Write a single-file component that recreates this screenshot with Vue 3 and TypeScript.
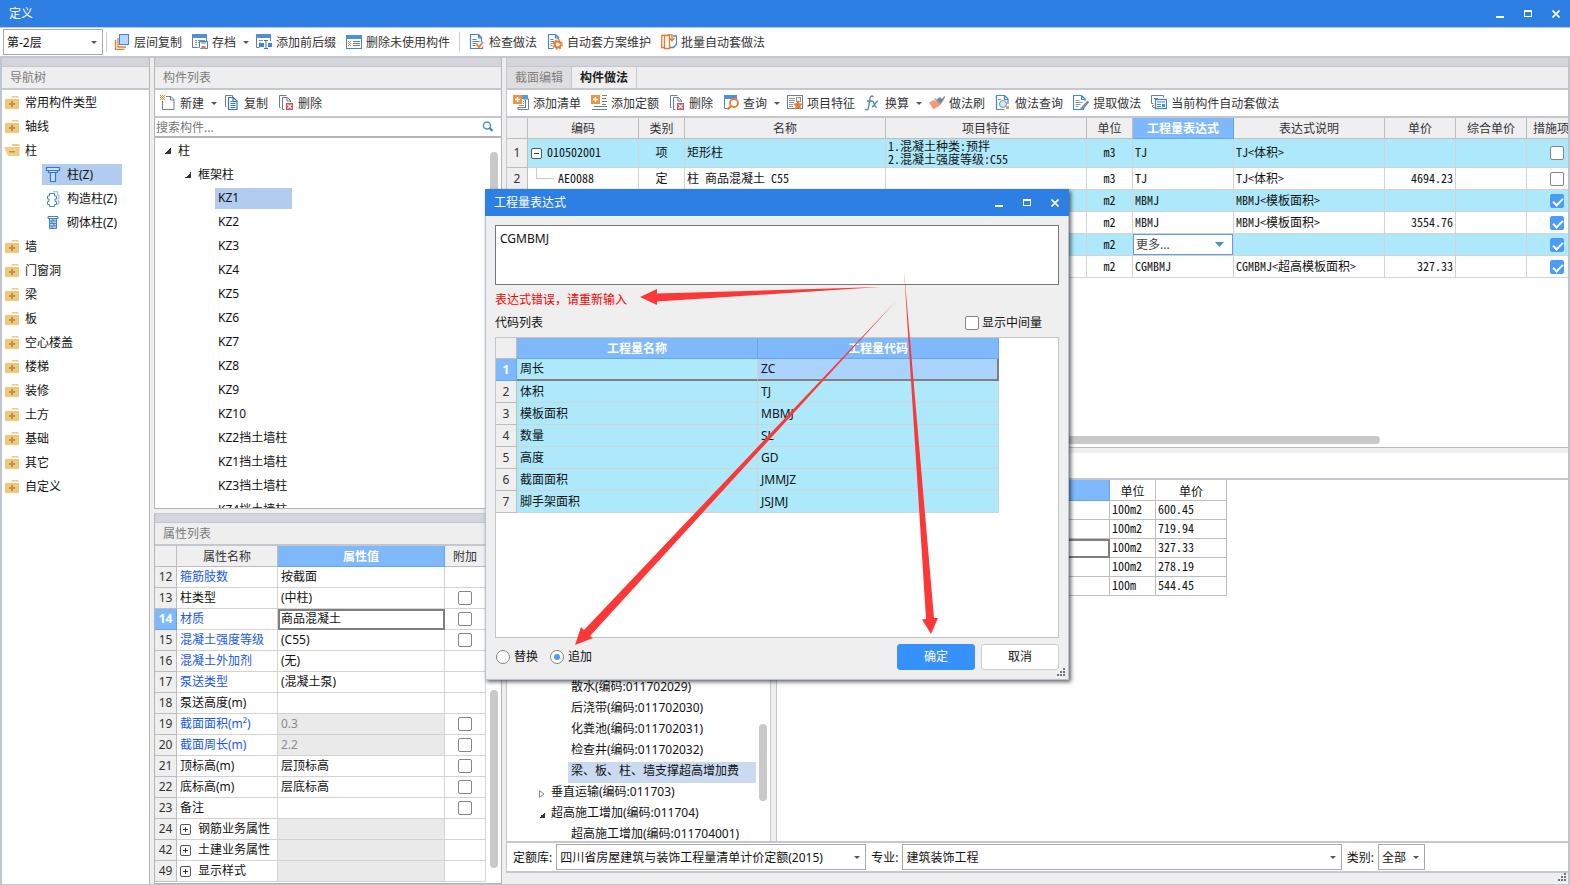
<script setup lang="ts">
import { ref } from 'vue'

interface ToolItem {
  icon: string
  label: string
  caret?: boolean
  sep?: boolean
}

const icons: Record<string, string> = {
  layers:
    '<path d="M1.500 6v9.500h9M4 4v9h8" fill="none" stroke="#ee7a30" stroke-width="1.300"/><rect x="5.500" y=".5" width="9" height="10" fill="#b5d7ff" stroke="#3f88d8"/>',
  archive:
    '<path d="M0 0h15v4H0z" fill="#4a90dc"/><path d="M.5 3v10.500h6M14.500 3v4" fill="none" stroke="#6b7f92"/><path d="M3 6.500h2M6 6.500h7M3 8.500h2M3 10.500h2M6 8.500h1" stroke="#8796a3"/><path d="M7.500 7.500h8v7h-7l-1-1z" fill="#fff" stroke="#3b7fd0"/><path d="M9 8h5v2H9z" fill="#9ec7f2"/><path d="M9.500 12h4v3h-4z" fill="#ee7a30"/>',
  affix:
    '<path d="M0 0h15v4H0z" fill="#4a90dc"/><path d="M.5 3v10.500h3M14.500 3v4" fill="none" stroke="#6b7f92"/><path d="M3 6.500h4M3 9h2" stroke="#8796a3"/><path d="M3 9h5v4H3zM12 9h4v4h-4z" fill="#3f88d8"/><path d="M8 6.500h4M10 6.500v8M8 14.500h4" stroke="#2f78cc"/>',
  purge:
    '<rect x=".5" y="1.500" width="15" height="13" fill="#fff" stroke="#3f88d8"/><path d="M0 1h16v4H0z" fill="#4a90dc"/><path d="M2 7h1v1H2zM4 7h1v1H4zM3 8h1v1H3zM2 9h1v1H2zM4 9h1v1H4zM3 10h1v1H3zM2 11h1v1H2zM4 11h1v1H4z" fill="#ee7a30"/><path d="M7 7.500h7M7 9.500h7M7 11.500h7" stroke="#6b7f92"/>',
  check:
    '<path d="M9.500.5h-8v14h12v-2M9.500.5l3 3V8M9.500.5v3.500h3.500" fill="none" stroke="#3f88d8" stroke-width="1.200"/><path d="M3.500 5.500h4M3.500 7.500h7M3.500 9.500h4M3.500 11.500h3" stroke="#6b7f92"/><path d="M7.500 10l2.500 3 4-5" fill="none" stroke="#ee7a30" stroke-width="1.800"/>',
  gearDoc:
    '<path d="M8.500.5h-7v14h5M8.500.5l3 3V6M8.500.5v3.500H12" fill="none" stroke="#3f88d8" stroke-width="1.200"/><path d="M3.500 5.500h3M3.500 7.500h4M3.500 9.500h2M3.500 11.500h2" stroke="#6b7f92"/><circle cx="10.700" cy="10.500" r="3" fill="#fff" stroke="#ee7a30" stroke-width="2"/><circle cx="10.700" cy="10.500" r="4.600" fill="none" stroke="#ee7a30" stroke-width="1.200" stroke-dasharray="1.900 1.720"/>',
  batch:
    '<path d="M5 1.500H.7v12H3" fill="none" stroke="#ee7a30" stroke-width="1.300"/><path d="M12 2h3.500v8l-3 3.500H9" fill="none" stroke="#3f88d8" stroke-width="1.300"/><path d="M3.500 1.500h5v13h-5z" fill="#fff" stroke="#ee7a30" stroke-width="1.300"/><path d="M6 .8h5v5M8.500 4l2.500 2.800L13.500 4" fill="none" stroke="#ee7a30" stroke-width="1.300"/>',
  create:
    '<path d="M6 1.500h5l3 3v10H2.500V6M10.500 1.500V5H14" fill="none" stroke="#6b7f92"/><path d="M0 0h1v1H0zM2 0h1v1H2zM4 0h1v1H4zM1 1h1v1H1zM3 1h1v1H3zM0 2h1v1H0zM2 2h1v1H2zM4 2h1v1H4zM1 3h1v1H1zM3 3h1v1H3zM0 4h1v1H0zM2 4h1v1H2zM4 4h1v1H4z" fill="#ee8a20"/>',
  copy:
    '<path d="M2.500 11.500h-1v-11h7v2" fill="none" stroke="#6b7f92"/><path d="M4.500 2.500h5l3.500 3.500v8.500H4.500zM9 2.500V6.500h4" fill="none" stroke="#2f78cc" stroke-width="1.200"/><path d="M6.500 6.500h2M6.500 8.500h5M6.500 10.500h5M6.500 12.500h5" stroke="#2f78cc"/>',
  remove:
    '<path d="M2.500 12.500h-1V.5h7M6.500 14.500h-2v-12h5l3 3V7M9 2.500V6h4" fill="none" stroke="#6b7f92"/><path d="M8 8h7v7H8z" fill="#d0545c"/><path d="M9.500 9.500l4 4M13.500 9.500l-4 4" stroke="#fff" stroke-width="1.200"/>',
  addList:
    '<path d="M5 12v2.500h10.500V4H10M12.500 6.500v6h-8" fill="none" stroke="#6b7f92"/><path d="M9 0h6v4H9z" fill="#5a9be6"/><path d="M6 12.500h6.500V5" fill="none" stroke="#6b7f92"/><path d="M0 0h9v9H0z" fill="#eb9446"/><path d="M4.500 2v5M2 4.500h5" stroke="#fff" stroke-width="1.300"/><path d="M10 6.500h1M10 8.500h1M6 10.500h5" stroke="#8796a3"/>',
  addQuota:
    '<path d="M0 0h9v9H0z" fill="#eb9446"/><path d="M4.500 2v5M2 4.500h5" stroke="#fff" stroke-width="1.300"/><path d="M11 .5h5M11 3.500h4M11 6.500h5M11 9.500h4M3 11.500h13M1 14.500h15" stroke="#6b7f92"/>',
  query:
    '<path d="M1.500 4v9.500h3M13.500 4v1" fill="none" stroke="#3f88d8"/><path d="M1 0h13v4H1z" fill="#4a90dc"/><circle cx="11" cy="8" r="4" fill="#fff" stroke="#ee7a30" stroke-width="1.800"/><path d="M8 11l-3.500 3.500" stroke="#ee7a30" stroke-width="2.200"/>',
  feature:
    '<rect x=".5" y=".5" width="15" height="13" fill="#fff" stroke="#6b7f92"/><path d="M2 3.500h6M2 5.500h6M2 7.500h5M2 9.500h4M2 11.500h4" stroke="#8796a3"/><rect x="9.500" y="2.500" width="4" height="4" fill="none" stroke="#8796a3"/><path d="M11 5l1.500 3.300 3.500.4-2.600 2.400.7 3.600-3.100-1.800-3.100 1.800.7-3.600L6 8.700l3.500-.4z" fill="#ee7a30"/>',
  fx: '<path d="M8.500 1.800C6.500-.2 5.300 1.500 4.900 4L3.700 11.500C3.300 14.500 2 15.800.3 14.200M2 6h5.500M7 6.500c2.500-1 2 6.500 4.800 5.500M13 6c-2 0-3.500 5.700-6 5.800" fill="none" stroke="#4c87c4" stroke-width="1.400"/>',
  brush:
    '<path d="M7 5l4-3 2 2 2.500-3 .5 1-2 4-5 6z" fill="#7a8690"/><path d="M5 4l6 6 1-1-6-6z" fill="#9aa3aa"/><path d="M5 5L0 7.500l4.500 7 7-5z" fill="#f79a6c"/>',
  findDoc:
    '<path d="M9.500.5h-8v14h8M9.500.5l3.500 3.500v5M9.500.5v4H13" fill="none" stroke="#3f88d8" stroke-width="1.200"/><circle cx="8" cy="9" r="3.500" fill="#d5e7fb" stroke="#7094be"/><path d="M3 4.500h3" stroke="#8796a3"/><path d="M11 11h3v3h-3z" fill="#f0a030"/>',
  extract:
    '<path d="M8.500.5h-8v14h10v-3M8.500.5l3.500 3.500v2M8.500.5v4H12" fill="none" stroke="#3f88d8" stroke-width="1.200"/><path d="M2.500 5.500h4M2.500 7.500h7M2.500 9.500h5M2.500 11.500h3" stroke="#8796a3"/><path d="M14.500 5.500l-5.500 6-1 3.500 3-1.500 5-6z" fill="#7d8c98"/><path d="M7 15l1-3 2 1.800z" fill="#25a0d0"/>',
  current:
    '<path d="M2.500 8.500h-2v-8h12v2M3 3.500h4M1.500 12V10" fill="none" stroke="#6b7f92"/><rect x="4.500" y="4.500" width="11" height="9" fill="#fff" stroke="#3f88d8" stroke-width="1.300"/><path d="M6 7h8M6 9.500h4M6 11.500h4" stroke="#3f88d8"/><path d="M11 9h3v3h-3z" fill="#4a90dc"/><path d="M1 10h2v1H1zM2 12h2v1H2z" fill="#ee7a30"/>',
  folder:
    '<path d="M8 1h6l1 1.500H7zM1 4h14v10H1z" fill="#efc87f"/><path d="M7 6h2v2h2v2H9v2H7v-2H5V8h2z" fill="#c5923a"/>',
  folderOpen:
    '<path d="M8 1h7.500v12H9z" fill="#efc87f"/><path d="M3 3.500h12" stroke="#fff"/><path d="M0 4h12l2 9H4z" fill="#f1cd88"/><path d="M5 8h6v1.500H5z" fill="#c5923a"/>',
  column:
    '<path d="M1.500.5h13v3h-13zM3.500 3.500h9v2h-9zM5.500 5.500h5v9h-5z" fill="#c9e0f8" stroke="#2f78cc" stroke-width="1.200"/>',
  tieColumn:
    '<path d="M8 .7h4.500V4H14v3.500h-1V10h1v3h-2" fill="none" stroke="#8ab8ea"/><path d="M4.500 2.500h5V5h2v3h-1.500v2.500h1.500v3h-2v2h-5v-2h-2v-3H4V8H2.500V5h2z" fill="#fff" stroke="#3f88d8"/>',
  brickColumn:
    '<path d="M3 1.500h10v2H3z" fill="#fff" stroke="#3f88d8"/><path d="M4.500 3.500h7v10h-7z" fill="#b4d2f2" stroke="#4a84bc"/><path d="M5 6h6M5 8.500h6M5 11h6M8 4v2M7 6v2.500M9 8.500V11M7 11v2.500" stroke="#4a84bc"/>'
}

const mainTools: ToolItem[] = [
  { icon: 'layers', label: '层间复制' },
  { icon: 'archive', label: '存档', caret: true },
  { icon: 'affix', label: '添加前后缀' },
  { icon: 'purge', label: '删除未使用构件', sep: true },
  { icon: 'check', label: '检查做法' },
  { icon: 'gearDoc', label: '自动套方案维护' },
  { icon: 'batch', label: '批量自动套做法' }
]
const listTools: ToolItem[] = [
  { icon: 'create', label: '新建', caret: true },
  { icon: 'copy', label: '复制' },
  { icon: 'remove', label: '删除' }
]
const methodTools: ToolItem[] = [
  { icon: 'addList', label: '添加清单' },
  { icon: 'addQuota', label: '添加定额' },
  { icon: 'remove', label: '删除' },
  { icon: 'query', label: '查询', caret: true },
  { icon: 'feature', label: '项目特征' },
  { icon: 'fx', label: '换算', caret: true },
  { icon: 'brush', label: '做法刷' },
  { icon: 'findDoc', label: '做法查询' },
  { icon: 'extract', label: '提取做法' },
  { icon: 'current', label: '当前构件自动套做法' }
]

const navItems = [
  { label: '常用构件类型', icon: 'folder' },
  { label: '轴线', icon: 'folder' },
  { label: '柱', icon: 'folderOpen' },
  { label: '柱(Z)', icon: 'column', child: true, active: true },
  { label: '构造柱(Z)', icon: 'tieColumn', child: true },
  { label: '砌体柱(Z)', icon: 'brickColumn', child: true },
  ...['墙', '门窗洞', '梁', '板', '空心楼盖', '楼梯', '装修', '土方', '基础', '其它', '自定义'].map(
    (label) => ({ label, icon: 'folder', child: false, active: false })
  )
]

const components = [
  'KZ1', 'KZ2', 'KZ3', 'KZ4', 'KZ5', 'KZ6', 'KZ7', 'KZ8', 'KZ9', 'KZ10',
  'KZ2挡土墙柱', 'KZ1挡土墙柱', 'KZ3挡土墙柱', 'KZ4挡土墙柱'
]

interface Prop {
  no: number
  name: string
  value?: string
  link?: boolean
  box?: boolean
  muted?: boolean
  group?: boolean
  current?: boolean
}
const props: Prop[] = [
  { no: 12, name: '箍筋肢数', value: '按截面', link: true },
  { no: 13, name: '柱类型', value: '(中柱)', box: true },
  { no: 14, name: '材质', value: '商品混凝土', link: true, box: true, current: true },
  { no: 15, name: '混凝土强度等级', value: '(C55)', link: true, box: true },
  { no: 16, name: '混凝土外加剂', value: '(无)', link: true },
  { no: 17, name: '泵送类型', value: '(混凝土泵)', link: true },
  { no: 18, name: '泵送高度(m)' },
  { no: 19, name: '截面面积(m²)', value: '0.3', link: true, box: true, muted: true },
  { no: 20, name: '截面周长(m)', value: '2.2', link: true, box: true, muted: true },
  { no: 21, name: '顶标高(m)', value: '层顶标高', box: true },
  { no: 22, name: '底标高(m)', value: '层底标高', box: true },
  { no: 23, name: '备注', box: true },
  { no: 24, name: '钢筋业务属性', group: true, muted: true },
  { no: 42, name: '土建业务属性', group: true, muted: true },
  { no: 49, name: '显示样式', group: true, muted: true }
]

interface Work {
  no: string
  code?: string
  kind?: string
  name?: string
  features?: string[]
  unit: string
  expr?: string
  note?: string
  price?: string
  measure: boolean
}
const works = ref<Work[]>([
  { no: '1', code: '010502001', kind: '项', name: '矩形柱', features: ['1.混凝土种类:预拌', '2.混凝土强度等级:C55'], unit: 'm3', expr: 'TJ', note: 'TJ<体积>', measure: false },
  { no: '2', code: 'AE0088', kind: '定', name: '柱 商品混凝土 C55', unit: 'm3', expr: 'TJ', note: 'TJ<体积>', price: '4694.23', measure: false },
  { no: '', unit: 'm2', expr: 'MBMJ', note: 'MBMJ<模板面积>', measure: true },
  { no: '', unit: 'm2', expr: 'MBMJ', note: 'MBMJ<模板面积>', price: '3554.76', measure: true },
  { no: '', unit: 'm2', measure: true },
  { no: '', unit: 'm2', expr: 'CGMBMJ', note: 'CGMBMJ<超高模板面积>', price: '327.33', measure: true }
])

const quotaTree = [
  { label: '散水(编码:011702029)', level: 2 },
  { label: '后浇带(编码:011702030)', level: 2 },
  { label: '化粪池(编码:011702031)', level: 2 },
  { label: '检查井(编码:011702032)', level: 2 },
  { label: '梁、板、柱、墙支撑超高增加费', level: 2, active: true },
  { label: '垂直运输(编码:011703)', level: 1, open: false },
  { label: '超高施工增加(编码:011704)', level: 1, open: true },
  { label: '超高施工增加(编码:011704001)', level: 2 }
]

const quotas = [
  ['100m2', '600.45'],
  ['100m2', '719.94'],
  ['100m2', '327.33'],
  ['100m2', '278.19'],
  ['100m', '544.45']
]

const codes = [
  ['周长', 'ZC'],
  ['体积', 'TJ'],
  ['模板面积', 'MBMJ'],
  ['数量', 'SL'],
  ['高度', 'GD'],
  ['截面面积', 'JMMJZ'],
  ['脚手架面积', 'JSJMJ']
]

const expression = ref('CGMBMJ')
const mode = ref('append')
const showMiddle = ref(false)
</script>

<template>
  <div class="window">
    <header class="titlebar">
      <span>定义</span>
      <div class="winbtns">
        <button aria-label="最小化"><svg width="8" height="8"><path d="M0 6h8v2H0z" fill="#fff" /></svg></button>
        <button aria-label="最大化"><svg width="8" height="8"><path d="M0 0h8v7H0zM1 2v4h6V2z" fill="#fff" fill-rule="evenodd" /></svg></button>
        <button aria-label="关闭"><svg width="8" height="8"><path d="M.5.5l7 7M7.500.5l-7 7" stroke="#fff" stroke-width="1.700" /></svg></button>
      </div>
    </header>

    <div class="toolbar main-tools">
      <select class="combo floor" aria-label="楼层"><option>第-2层</option></select>
      <i class="sep"></i>
      <template v-for="t in mainTools" :key="t.label">
        <button class="tool">
          <svg class="ico" viewBox="0 0 16 16" v-html="icons[t.icon]"></svg><span>{{ t.label }}</span><i v-if="t.caret" class="caret"></i>
        </button>
        <i v-if="t.sep" class="sep"></i>
      </template>
    </div>

    <main class="body">
      <aside class="panel nav">
        <div class="strip"></div>
        <h2 class="phead">导航树</h2>
        <ul class="navtree">
          <li v-for="n in navItems" :key="n.label" :class="{ child: n.child, active: n.active }">
            <span class="node"><svg class="ico" viewBox="0 0 16 16" v-html="icons[n.icon]"></svg>{{ n.label }}</span>
          </li>
        </ul>
      </aside>

      <div class="middle">
        <section class="panel list">
          <div class="strip"></div>
          <h2 class="phead">构件列表</h2>
          <div class="toolbar">
            <button v-for="t in listTools" :key="t.label" class="tool">
              <svg class="ico" viewBox="0 0 16 16" v-html="icons[t.icon]"></svg><span>{{ t.label }}</span><i v-if="t.caret" class="caret"></i>
            </button>
          </div>
          <label class="search">
            <input type="text" placeholder="搜索构件..." aria-label="搜索构件" />
            <svg width="12" height="12"><circle cx="5" cy="4.500" r="3.500" fill="none" stroke="#4a97cf" stroke-width="1.500" /><path d="M7.500 7l3 3" stroke="#2f84c0" stroke-width="2" /></svg>
          </label>
          <div class="treewrap">
            <ul class="comptree">
              <li class="root"><i class="open"></i>柱</li>
              <li class="branch"><i class="open"></i>框架柱</li>
              <li v-for="(c, i) in components" :key="c" class="leaf" :class="{ active: i === 0 }"><span>{{ c }}</span></li>
            </ul>
            <i class="thumb tall"></i>
          </div>
        </section>

        <section class="panel attrs">
          <div class="strip"></div>
          <h2 class="phead">属性列表</h2>
          <div class="attrwrap">
            <table class="grid attr-table">
              <colgroup><col class="w-no" /><col class="w-name" /><col /><col class="w-add" /></colgroup>
              <thead><tr><th></th><th>属性名称</th><th class="hot">属性值</th><th>附加</th></tr></thead>
              <tbody>
                <tr v-for="p in props" :key="p.no">
                  <th :class="{ hot: p.current }">{{ p.no }}</th>
                  <td :class="{ link: p.link }">
                    <button v-if="p.group" class="fold plus" aria-label="展开"></button>{{ p.name }}
                  </td>
                  <td :class="{ muted: p.muted, cursor: p.current }">{{ p.value }}</td>
                  <td><input v-if="p.box" type="checkbox" :aria-label="p.name + ' 附加'" /></td>
                </tr>
              </tbody>
            </table>
            <i class="thumb low"></i>
          </div>
        </section>
      </div>

      <section class="right">
        <div class="panel work">
          <div class="strip"></div>
          <div class="tabs">
            <button>截面编辑</button>
            <button class="on">构件做法</button>
          </div>
          <div class="toolbar method-tools">
            <button v-for="t in methodTools" :key="t.label" class="tool">
              <svg class="ico" viewBox="0 0 16 16" v-html="icons[t.icon]"></svg><span>{{ t.label }}</span><i v-if="t.caret" class="caret"></i>
            </button>
          </div>

          <div class="split">
            <div class="upper">
              <table class="grid work-table">
                <colgroup>
                  <col class="w-no" /><col class="w-code" /><col class="w-unit" /><col class="w-long" /><col class="w-long" /><col class="w-unit" />
                  <col class="w-expr" /><col class="w-note" /><col class="w-price" /><col class="w-price" /><col class="w-measure" />
                </colgroup>
                <thead>
                  <tr>
                    <th></th><th>编码</th><th>类别</th><th>名称</th><th>项目特征</th><th>单位</th>
                    <th class="hot">工程量表达式</th><th>表达式说明</th><th>单价</th><th>综合单价</th><th>措施项目</th>
                  </tr>
                </thead>
                <tbody>
                  <tr v-for="(w, i) in works" :key="i" :class="{ cyan: i % 2 === 0, first: i === 0 }">
                    <th>{{ w.no }}</th>
                    <td class="code">
                      <button v-if="i === 0" class="fold" aria-label="折叠"></button>
                      <i v-if="i === 1" class="elbow"></i>{{ w.code }}
                    </td>
                    <td class="mid">{{ w.kind }}</td>
                    <td>{{ w.name }}</td>
                    <td class="features"><div v-for="f in w.features" :key="f">{{ f }}</div></td>
                    <td class="mid">{{ w.unit }}</td>
                    <td :class="{ editing: i === 4 }">
                      <select v-if="i === 4" class="more" aria-label="工程量表达式"><option>更多...</option></select>
                      <template v-else>{{ w.expr }}</template>
                    </td>
                    <td>{{ w.note }}</td>
                    <td class="num">{{ w.price }}</td>
                    <td></td>
                    <td class="tick"><input v-model="w.measure" type="checkbox" aria-label="措施项目" /></td>
                  </tr>
                </tbody>
              </table>
              <i class="hthumb"></i>
            </div>
            <div class="lower">
              <div class="lowbar"></div>
              <div class="lowsplit">
                <div class="quotatree">
                  <ul>
                    <li v-for="q in quotaTree" :key="q.label" :class="['lv' + q.level, { active: q.active }]">
                      <i v-if="q.level === 1" :class="q.open ? 'open' : 'shut'"></i><span>{{ q.label }}</span>
                    </li>
                  </ul>
                  <i class="thumb short"></i>
                </div>
                <div class="quotas">
                  <table class="grid quota-table">
                    <colgroup><col class="w-blank" /><col class="w-unit" /><col class="w-price" /></colgroup>
                    <thead><tr><th class="hot"></th><th>单位</th><th>单价</th></tr></thead>
                    <tbody>
                      <tr v-for="(q, i) in quotas" :key="i"><td :class="{ cursor: i === 2 }"></td><td>{{ q[0] }}</td><td>{{ q[1] }}</td></tr>
                    </tbody>
                  </table>
                </div>
              </div>
            </div>
          </div>

          <div class="filters">
            <label for="lib">定额库:</label>
            <select id="lib" class="combo lib"><option>四川省房屋建筑与装饰工程量清单计价定额(2015)</option></select>
            <label for="major">专业:</label>
            <select id="major" class="combo major"><option>建筑装饰工程</option></select>
            <label for="kind">类别:</label>
            <select id="kind" class="combo kind"><option>全部</option></select>
          </div>
        </div>
        <div class="status">
          <svg class="grip" width="8" height="8"><path d="M6 0h2v2H6zM3 3h2v2H3zM6 3h2v2H6zM0 6h2v2H0zM3 6h2v2H3zM6 6h2v2H6z" fill="#6e747c" /></svg>
        </div>
      </section>
    </main>

    <div class="dialog" role="dialog" aria-labelledby="dlg-title">
      <header class="titlebar">
        <span id="dlg-title">工程量表达式</span>
        <div class="winbtns">
          <button aria-label="最小化"><svg width="8" height="8"><path d="M0 6h8v2H0z" fill="#fff" /></svg></button>
          <button aria-label="最大化"><svg width="8" height="8"><path d="M0 0h8v7H0zM1 2v4h6V2z" fill="#fff" fill-rule="evenodd" /></svg></button>
          <button aria-label="关闭"><svg width="8" height="8"><path d="M.5.5l7 7M7.500.5l-7 7" stroke="#fff" stroke-width="1.700" /></svg></button>
        </div>
      </header>
      <div class="dlg-body">
        <textarea v-model="expression" aria-label="表达式" spellcheck="false"></textarea>
        <p class="error">表达式错误，请重新输入</p>
        <div class="listhead">
          <span>代码列表</span>
          <label><input v-model="showMiddle" type="checkbox" />显示中间量</label>
        </div>
        <div class="codebox">
          <table class="grid code-table">
            <colgroup><col class="w-no" /><col /><col /></colgroup>
            <thead><tr><th></th><th class="hot">工程量名称</th><th class="hot">工程量代码</th></tr></thead>
            <tbody>
              <tr v-for="(c, i) in codes" :key="c[1]" :class="{ sel: i === 0 }">
                <th :class="{ hot: i === 0 }">{{ i + 1 }}</th><td>{{ c[0] }}</td><td>{{ c[1] }}</td>
              </tr>
            </tbody>
          </table>
        </div>
        <div class="actions">
          <label><input v-model="mode" type="radio" name="mode" value="replace" />替换</label>
          <label><input v-model="mode" type="radio" name="mode" value="append" />追加</label>
          <span class="grow"></span>
          <button class="btn primary">确定</button>
          <button class="btn">取消</button>
        </div>
      </div>
      <svg class="grip dlg-grip" width="8" height="8"><path d="M6 0h2v2H6zM3 3h2v2H3zM6 3h2v2H6zM0 6h2v2H0zM3 6h2v2H3zM6 6h2v2H6z" fill="#6e747c" /></svg>
      <svg class="arrows" viewBox="0 0 584 491" fill="#fb3838" aria-hidden="true">
        <path d="M155 108l17-8v4.500L395 98 172 112.500V116z" />
        <path d="M90 456l6-18 3 3L412 111 105 447l3 2z" />
        <path d="M446 445l-9-14.500 4-.5L419 81 449 429h4z" />
      </svg>
    </div>
  </div>
</template>

<style>
html,
body {
  margin: 0;
  overflow: hidden;
}
</style>

<style scoped>
* {
  box-sizing: border-box;
}
.window {
  --line: #c4c7cd;
  --blue: #2d7fe3;
  position: relative;
  display: flex;
  flex-direction: column;
  height: 100vh;
  background: #efefef;
  color: #111;
  font: 12px/18px 'Noto Sans', 'Noto Sans CJK SC', sans-serif;
  overflow: hidden;
}
button,
input,
select,
textarea {
  font: inherit;
  color: inherit;
  margin: 0;
}
ul,
h2,
p {
  margin: 0;
  padding: 0;
  list-style: none;
}
.titlebar {
  flex: none;
  display: flex;
  justify-content: space-between;
  align-items: center;
  height: 27px;
  padding: 0 10px 0 9px;
  background: var(--blue);
  color: #fff;
}
.winbtns {
  display: flex;
  gap: 20px;
}
.winbtns button {
  display: flex;
  padding: 0;
  border: 0;
  background: none;
}
.toolbar {
  flex: none;
  display: flex;
  align-items: center;
  gap: 2px;
  height: 28px;
  padding: 0 1px;
  background: #fff;
  border-bottom: 2px solid var(--line);
  color: #333;
}
.main-tools {
  height: 31px;
  padding-left: 1px;
  border-top: 1px solid var(--line);
}
.method-tools {
  padding-left: 2px;
}
.tool {
  display: flex;
  align-items: center;
  gap: 4px;
  height: 22px;
  padding: 0 4px;
  border: 0;
  background: none;
  white-space: nowrap;
}
.tool span {
  padding-top: 2px;
}
.ico {
  flex: none;
  width: 16px;
  height: 16px;
}
.caret {
  width: 0;
  margin: 0 -3px 0 3px;
  border: 3px solid transparent;
  border-top-color: #555;
  border-bottom: 0;
}
.sep {
  width: 1px;
  height: 20px;
  margin: 0 3px;
  background: #ccc;
}
.combo {
  height: 26px;
  padding: 2px 16px 0 3px;
  border: 1px solid #a8a8a8;
  border-radius: 0;
  appearance: none;
  background: #fff url("data:image/svg+xml,%3Csvg xmlns='http://www.w3.org/2000/svg' width='6' height='3'%3E%3Cpath d='M0 0h6L3 3z' fill='%23555'/%3E%3C/svg%3E") no-repeat right 5px center;
  color: #111;
}
.floor {
  width: 100px;
  margin-left: 2px;
}
.floor + .sep {
  margin: 0 1px;
}

.body {
  flex: 1;
  display: flex;
  gap: 4px;
  min-height: 0;
  border: solid #c0c5d2;
  border-width: 0 2px 1px;
}
.panel {
  display: flex;
  flex-direction: column;
  min-height: 0;
  background: #fff;
}
.strip {
  flex: none;
  height: 9px;
  background: #d3d5db;
  border-bottom: 1px solid var(--line);
}
.phead {
  flex: none;
  height: 23px;
  padding-left: 8px;
  background: #eee;
  border-bottom: 2px solid var(--line);
  color: #7b7b7b;
  font-size: 12px;
  font-weight: 400;
  line-height: 21px;
}
.nav {
  flex: none;
  width: 148px;
  border-right: 1px solid #b4b4b4;
}
.navtree {
  padding-top: 1px;
}
.navtree li {
  display: flex;
  height: 24px;
  padding-left: 2px;
}
.node {
  display: flex;
  align-items: center;
  gap: 5px;
  height: 24px;
}
.navtree .child {
  padding-left: 40px;
}
.child .node {
  width: 80px;
  height: 21px;
  margin-top: 1px;
  padding-left: 3px;
  gap: 6px;
}
.active .node {
  background: #b1ccee;
}

.middle {
  flex: none;
  display: flex;
  flex-direction: column;
  gap: 4px;
  width: 348px;
}
.middle .panel {
  border: 1px solid #b4b4b4;
}
.middle .list {
  flex: 1;
  border-top: 0;
}
.middle .attrs {
  flex: none;
  padding-bottom: 1px;
  border-top-color: var(--line);
}
.search {
  flex: none;
  display: flex;
  align-items: center;
  height: 20px;
  padding-right: 7px;
  border-bottom: 2px solid #b4b4b4;
}
.search input {
  flex: 1;
  height: 18px;
  padding: 1px 1px 0;
  border: 0;
  outline: 0;
}
.search input::placeholder {
  color: #777;
  opacity: 1;
}
.treewrap {
  position: relative;
  flex: 1;
  min-height: 0;
  overflow: hidden;
}
.comptree li {
  display: flex;
  align-items: center;
  height: 24px;
}
.comptree {
  padding-top: 1px;
}
.comptree .root {
  padding-left: 10px;
}
.comptree .branch {
  padding-left: 30px;
}
.comptree .leaf {
  padding: 1px 0 0 60px;
  align-items: flex-start;
}
.leaf span {
  height: 21px;
  padding: 0 3px;
  line-height: 20px;
}
.leaf.active span {
  width: 77px;
  background: #b1ccee;
}
.open {
  position: relative;
  width: 6px;
  height: 6px;
  margin-right: 7px;
  background: linear-gradient(135deg, transparent 50%, #333 50%);
}
.shut {
  width: 6px;
  height: 8px;
  margin-right: 7px;
  background: url("data:image/svg+xml,%3Csvg xmlns='http://www.w3.org/2000/svg' width='6' height='8'%3E%3Cpath d='M.5.7v6.600L5 4z' fill='none' stroke='%23888'/%3E%3C/svg%3E");
}
.thumb {
  position: absolute;
  right: 3px;
  width: 8px;
  border-radius: 4px;
  background: #c9c9c9;
}
.tall {
  top: 14px;
  height: 240px;
}
.low {
  bottom: 14px;
  height: 178px;
}
.short {
  bottom: 40px;
  height: 77px;
}
.attrwrap {
  position: relative;
  padding-right: 15px;
}

.grid {
  table-layout: fixed;
  border-spacing: 0;
  line-height: 18px;
}
.grid th,
.grid td {
  height: 22px;
  padding: 0 2px;
  border: solid #d3d3d3;
  border-width: 0 1px 1px 0;
  white-space: nowrap;
  overflow: hidden;
}
.grid th {
  padding: 0;
  background: #efefef;
  border-color: #bdbdbd;
  color: #333;
  font-weight: 400;
  text-align: center;
}
.grid thead th {
  height: 21px;
  padding-top: 2px;
}
.grid th.hot {
  background: #7fb9fc;
  border-color: #63a5ee;
  color: #fff;
  font-weight: 700;
}
.grid td.cursor {
  outline: 2px solid #7f7f7f;
  outline-offset: -2px;
}
.w-no {
  width: 21px;
}
.attr-table .w-no {
  width: 22px;
}
.w-name {
  width: 101px;
}
.w-add {
  width: 41px;
}
.w-code {
  width: 111px;
}
.w-unit {
  width: 46px;
}
.w-long {
  width: 201px;
}
.w-expr {
  width: 101px;
}
.w-note {
  width: 151px;
}
.w-price {
  width: 71px;
}
.w-measure {
  width: 61px;
}
.w-blank {
  width: 333px;
}
.attr-table {
  width: 100%;
}
.attr-table td,
.attr-table tbody th {
  height: 21px;
}
.attr-table td {
  padding: 0 3px;
}
.attr-table .link {
  color: #1857f2;
}
.attr-table .muted {
  background: #eaeaea;
  color: #8a8a8a;
}
input[type='checkbox'],
input[type='radio'] {
  appearance: none;
  position: relative;
  flex: none;
  width: 14px;
  height: 14px;
  border: 1px solid #858585;
  border-radius: 2px;
  background: #fff;
}
td input[type='checkbox'] {
  display: block;
  margin: 0 auto;
}
input[type='checkbox']:checked {
  border-color: #4b9bf8;
  background: #4b9bf8;
}
input[type='checkbox']:checked::after {
  content: '';
  position: absolute;
  left: 4px;
  top: 1px;
  width: 4px;
  height: 8px;
  border: solid #fff;
  border-width: 0 2px 2px 0;
  transform: rotate(45deg);
}
input[type='radio'] {
  border-radius: 7px;
}
input[type='radio']:checked::after {
  content: '';
  position: absolute;
  inset: 3px;
  border-radius: 3px;
  background: #4b9bf8;
}
.fold {
  width: 11px;
  height: 11px;
  padding: 0;
  border: 1px solid #555;
  border-radius: 2px;
  vertical-align: -1px;
  background: linear-gradient(#333, #333) center / 5px 1px no-repeat #fff;
}
.fold.plus {
  margin-right: 7px;
  background:
    linear-gradient(#333, #333) center / 5px 1px no-repeat,
    linear-gradient(#333, #333) center / 1px 5px no-repeat,
    #fff;
}

.right {
  flex: 1;
  display: flex;
  flex-direction: column;
  min-width: 0;
}
.work {
  flex: 1;
  border-left: 1px solid var(--line);
}
.tabs {
  flex: none;
  display: flex;
  height: 23px;
  background: #eee;
  border-bottom: 2px solid var(--line);
}
.tabs button {
  padding: 0 8px;
  border: 0;
  border-right: 1px solid var(--line);
  background: #dedede;
  color: #808080;
}
.tabs .on {
  background: #efefef;
  color: #222;
  font-weight: 700;
}
.split {
  flex: 1;
  display: grid;
  grid-template-rows: 330fr 5px 388fr;
  min-height: 0;
  background: #efefef;
}
.upper {
  position: relative;
  background: #fff;
  border-bottom: 1px solid #bbb;
  overflow: hidden;
}
.work-table {
  width: 1081px;
}
.work-table td,
.quota-table {
  font-family: 'Noto Sans Mono CJK SC', 'Noto Sans CJK SC', monospace;
}
.work-table td {
  padding-bottom: 2px;
}
.work-table .tick {
  padding: 0;
}
.work-table .first td {
  height: 29px;
}
.cyan td {
  background: #ade9fb;
}
.work-table .mid {
  text-align: center;
}
.work-table .num {
  text-align: right;
}
.work-table .features {
  line-height: 13px;
}
.work-table .code {
  position: relative;
  padding-left: 30px;
}
.work-table .first .code {
  padding-left: 3px;
}
.code .fold {
  margin-right: 5px;
}
.elbow {
  position: absolute;
  left: 8px;
  top: 0;
  width: 18px;
  height: 11px;
  border: solid #ccc;
  border-width: 0 0 1px 1px;
}
.work-table .editing {
  padding: 0;
}
.more {
  display: block;
  width: 100%;
  height: 21px;
  padding: 0 2px;
  border: 1px solid #5b9fe8;
  border-radius: 0;
  appearance: none;
  font-family: 'Noto Sans', 'Noto Sans CJK SC', sans-serif;
  color: #444;
  background: #fff url("data:image/svg+xml,%3Csvg xmlns='http://www.w3.org/2000/svg' width='9' height='5'%3E%3Cpath d='M0 0h9L4.500 5z' fill='%234a90c4'/%3E%3C/svg%3E") no-repeat right 8px center;
}
.hthumb {
  position: absolute;
  left: 3px;
  bottom: 3px;
  width: 82%;
  height: 8px;
  border-radius: 4px;
  background: #c9c9c9;
}
.lower {
  grid-row: 3;
  display: flex;
  flex-direction: column;
  min-height: 0;
}
.lowbar {
  flex: none;
  height: 27px;
  background: #fff;
  border-bottom: 2px solid var(--line);
}
.lowsplit {
  flex: 1;
  display: flex;
  gap: 5px;
  min-height: 0;
}
.quotatree {
  position: relative;
  flex: none;
  display: flex;
  flex-direction: column;
  justify-content: flex-end;
  width: 264px;
  background: #fff;
  border-right: 1px solid var(--line);
  overflow: hidden;
}
.quotatree ul {
  margin-bottom: -5px;
}
.quotatree li {
  display: flex;
  align-items: center;
  height: 21px;
}
.quotatree span {
  height: 21px;
  padding: 0 3px;
  line-height: 18px;
}
.lv1 {
  padding-left: 32px;
}
.lv1 .open,
.lv1 .shut {
  margin-right: 3px;
}
.lv2 {
  padding-left: 61px;
}
.quotatree .active span {
  width: 188px;
  background: #c9daf1;
}
.quotas {
  flex: 1;
  background: #fff;
  border-left: 1px solid var(--line);
}
.quota-table {
  width: 450px;
  line-height: 16px;
}
.quota-table td {
  height: 19px;
  padding-bottom: 2px;
  border-color: #bdbdbd;
}
.quota-table th {
  background: #fff;
  color: #111;
}
.filters {
  flex: none;
  display: flex;
  align-items: center;
  height: 32px;
  padding: 0 138px 0 6px;
  border: solid var(--line);
  border-width: 2px 0;
}
.filters label {
  flex: none;
  padding-top: 2px;
}
.filters .combo {
  margin: 0 5px 0 4px;
}
.lib {
  width: 310px;
}
.major {
  flex: 1;
}
.kind {
  width: 47px;
}
.status {
  flex: none;
  display: flex;
  justify-content: flex-end;
  height: 11px;
  padding-right: 2px;
}

.dialog {
  position: absolute;
  left: 485px;
  top: 189px;
  display: flex;
  flex-direction: column;
  width: 584px;
  height: 491px;
  background: #efefef;
  box-shadow: 2px 2px 4px rgba(0, 0, 0, 0.6);
}
.dlg-body {
  flex: 1;
  display: flex;
  flex-direction: column;
  padding: 9px 9px 9px;
  border: 1px solid #b5c0d0;
  border-top: 0;
}
textarea {
  flex: none;
  display: block;
  height: 60px;
  padding: 4px;
  border: 1px solid #767676;
  border-radius: 0;
  resize: none;
  outline: 0;
}
.error {
  height: 28px;
  color: #f00;
  line-height: 30px;
}
.listhead {
  display: flex;
  justify-content: space-between;
  align-items: center;
  height: 24px;
  padding: 0 17px 4px 0;
}
.listhead label,
.actions label {
  display: flex;
  align-items: center;
  gap: 3px;
}
.codebox {
  flex: 1;
  background: #fff;
  border: 1px solid #c4c4c4;
}
.code-table {
  width: 503px;
}
.code-table td {
  padding: 0 3px;
  background: #ade9fb;
}
.code-table .sel td {
  border-bottom: 2px solid #7f7f7f;
}
.code-table .sel td:last-child {
  border-right: 2px solid #7f7f7f;
  background: #aad4fd;
}
.actions {
  flex: none;
  display: flex;
  align-items: center;
  gap: 6px;
  height: 32px;
  padding: 6px 0 0 1px;
}
.actions label {
  gap: 4px;
  margin-right: 6px;
}
.grow {
  flex: 1;
}
.btn {
  width: 78px;
  height: 26px;
  padding: 0;
  border: 1px solid #ccc;
  border-radius: 3px;
  background: #fff;
}
.primary {
  border-color: #3791fa;
  background: #3791fa;
  color: #fff;
}
.dlg-grip {
  position: absolute;
  right: 4px;
  bottom: 4px;
}
.arrows {
  position: absolute;
  inset: 0;
  pointer-events: none;
}
</style>
